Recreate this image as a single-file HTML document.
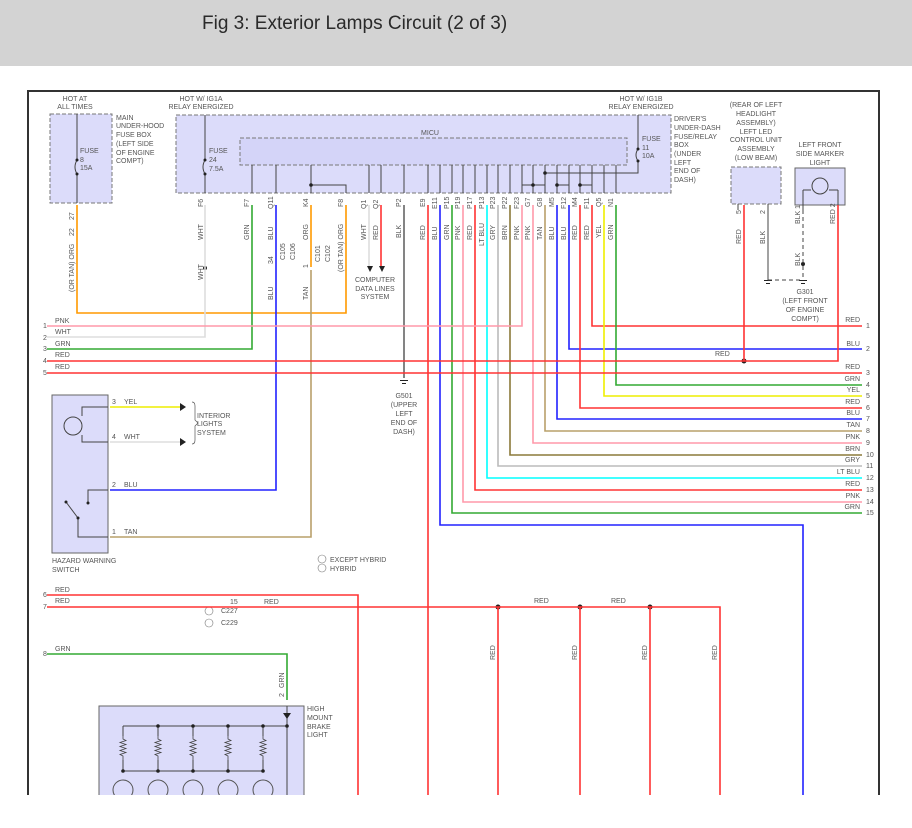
<!DOCTYPE html>
<html><head><meta charset="utf-8"><style>
html,body{margin:0;padding:0;background:#fff;width:912px;height:828px;overflow:hidden}
.bar{position:absolute;left:0;top:0;width:912px;height:66px;background:#d3d3d3}
.bar span{position:absolute;left:202px;top:13px;font:19px "Liberation Sans",sans-serif;color:#2a2a2a}
svg{position:absolute;left:0;top:0}
text{font-family:"Liberation Sans",sans-serif;font-size:7px;fill:#555}
</style></head><body>
<div class="bar"><span>Fig 3: Exterior Lamps Circuit (2 of 3)</span></div>
<svg width="912" height="828" viewBox="0 0 912 828">
<defs><clipPath id="c"><rect x="0" y="0" width="912" height="795"/></clipPath>
<path id="rz" d="M0 -12V-9l3 1.5l-6 2l6 2l-6 2l6 2l-6 2l6 2l-6 2l3 1.5V12" fill="none" stroke="#444" stroke-width=".8"/></defs>
<g clip-path="url(#c)">
<path d="M28 795 V91 H879 V795" fill="none" stroke="#333" stroke-width="2"/>
<rect x="50" y="114" width="62" height="89" fill="#dcdcfa" stroke="#777" stroke-dasharray="4,2"/>
<rect x="176" y="115" width="495" height="78" fill="#dcdcfa" stroke="#777" stroke-dasharray="4,2"/>
<rect x="240" y="138" width="387" height="27" fill="#d4d4f8" stroke="#777" stroke-dasharray="4,2"/>
<rect x="731" y="167" width="50" height="37" fill="#dcdcfa" stroke="#777" stroke-dasharray="4,2"/>
<rect x="795" y="168" width="50" height="37" fill="#dcdcfa" stroke="#666"/>
<rect x="52" y="395" width="56" height="158" fill="#dcdcfa" stroke="#666"/>
<rect x="99" y="706" width="205" height="100" fill="#dcdcfa" stroke="#666"/>
<g text-anchor="middle">
<text x="75" y="101">HOT AT</text><text x="75" y="109">ALL TIMES</text>
<text x="201" y="101">HOT W/ IG1A</text><text x="201" y="109">RELAY ENERGIZED</text>
<text x="641" y="101">HOT W/ IG1B</text><text x="641" y="109">RELAY ENERGIZED</text>
<text x="756" y="107">(REAR OF LEFT</text><text x="756" y="116">HEADLIGHT</text><text x="756" y="125">ASSEMBLY)</text><text x="756" y="134">LEFT LED</text><text x="756" y="142">CONTROL UNIT</text><text x="756" y="151">ASSEMBLY</text><text x="756" y="160">(LOW BEAM)</text>
<text x="820" y="147">LEFT FRONT</text><text x="820" y="156">SIDE MARKER</text><text x="820" y="165">LIGHT</text>
<text x="805" y="294">G301</text><text x="805" y="303">(LEFT FRONT</text><text x="805" y="312">OF ENGINE</text><text x="805" y="321">COMPT)</text>
<text x="404" y="398">G501</text><text x="404" y="407">(UPPER</text><text x="404" y="416">LEFT</text><text x="404" y="425">END OF</text><text x="404" y="434">DASH)</text>
<text x="375" y="282">COMPUTER</text><text x="375" y="291">DATA LINES</text><text x="375" y="299">SYSTEM</text>
<text x="430" y="135">MICU</text>
</g>
<text x="116" y="120">MAIN</text><text x="116" y="128">UNDER-HOOD</text><text x="116" y="137">FUSE BOX</text><text x="116" y="146">(LEFT SIDE</text><text x="116" y="155">OF ENGINE</text><text x="116" y="163">COMPT)</text>
<text x="674" y="121">DRIVER'S</text><text x="674" y="130">UNDER-DASH</text><text x="674" y="139">FUSE/RELAY</text><text x="674" y="147">BOX</text><text x="674" y="156">(UNDER</text><text x="674" y="165">LEFT</text><text x="674" y="173">END OF</text><text x="674" y="182">DASH)</text>
<text x="80" y="153">FUSE</text><text x="80" y="162">8</text><text x="80" y="170">15A</text>
<text x="209" y="153">FUSE</text><text x="209" y="162">24</text><text x="209" y="171">7.5A</text>
<text x="642" y="141">FUSE</text><text x="642" y="150">11</text><text x="642" y="158">10A</text>
<text x="197" y="418">INTERIOR</text><text x="197" y="426">LIGHTS</text><text x="197" y="435">SYSTEM</text>
<text x="52" y="563">HAZARD WARNING</text><text x="52" y="572">SWITCH</text>
<text x="307" y="711">HIGH</text><text x="307" y="720">MOUNT</text><text x="307" y="729">BRAKE</text><text x="307" y="737">LIGHT</text>
<text x="330" y="562">EXCEPT HYBRID</text><text x="330" y="571">HYBRID</text>
<circle cx="322" cy="559" r="4" fill="none" stroke="#777" stroke-width=".6"/><circle cx="322" cy="568" r="4" fill="none" stroke="#777" stroke-width=".6"/>
<text x="221" y="613">C227</text><text x="221" y="625">C229</text>
<circle cx="209" cy="611" r="4" fill="none" stroke="#777" stroke-width=".6"/><circle cx="209" cy="623" r="4" fill="none" stroke="#777" stroke-width=".6"/>
<text x="230" y="604">15</text><text x="264" y="604">RED</text>
<text x="534" y="603">RED</text><text x="611" y="603">RED</text><text x="715" y="356">RED</text>
<g stroke="#444" fill="none" stroke-width="1">
<path d="M77 114 V160 q-4 7 0 14 V203"/><path d="M205 115 V160 q-4 7 0 14 V193"/><path d="M638 115 V149 q-4 6 0 12 V173 H545"/>
<path d="M252 165V193M276 165V193M311 165V193M311 185H346V193M369 165V193M381 165V193M404 165V193M428 165V193M440 165V193M452 165V193M463 165V193M475 165V193M487 165V193M498 165V193M510 165V193M522 165V193M533 165V193M545 165V193M557 165V193M569 165V193M580 165V193M592 165V193M604 165V193M616 165V193M522 185H545M557 185H569M580 185H592"/>
<path d="M738 204V210M768 204V280M803 190H811M829 190H838M803 190V210M838 190V210"/>
<circle cx="820" cy="186" r="8"/>
<path d="M108 407H82V416M82 435V442H108M108 490H88V503M66 502L78 518M108 537H78V518"/>
<circle cx="73" cy="426" r="9"/>
<path d="M123 726H287M123 771H263M287 706V795"/>
<path d="M123 726V736M158 726V736M193 726V736M228 726V736M263 726V736M123 760V771M158 760V771M193 760V771M228 760V771M263 760V771"/>
</g>
<use href="#rz" x="123" y="748"/><use href="#rz" x="158" y="748"/><use href="#rz" x="193" y="748"/><use href="#rz" x="228" y="748"/><use href="#rz" x="263" y="748"/>
<g fill="#222"><circle cx="77" cy="160" r="1.5"/><circle cx="77" cy="174" r="1.5"/><circle cx="205" cy="160" r="1.5"/><circle cx="205" cy="174" r="1.5"/><circle cx="638" cy="149" r="1.5"/><circle cx="638" cy="161" r="1.5"/>
<circle cx="311" cy="185" r="1.8"/><circle cx="533" cy="185" r="1.8"/><circle cx="545" cy="173" r="1.8"/><circle cx="557" cy="185" r="1.8"/><circle cx="580" cy="185" r="1.8"/>
<circle cx="744" cy="361" r="2.5"/><circle cx="498" cy="607" r="2.5"/><circle cx="580" cy="607" r="2.5"/><circle cx="650" cy="607" r="2.5"/><circle cx="205" cy="268" r="2"/><circle cx="803" cy="264" r="2"/>
<circle cx="88" cy="503" r="1.5"/><circle cx="66" cy="502" r="1.5"/><circle cx="78" cy="518" r="1.5"/>
<circle cx="158" cy="726" r="1.8"/><circle cx="193" cy="726" r="1.8"/><circle cx="228" cy="726" r="1.8"/><circle cx="263" cy="726" r="1.8"/><circle cx="287" cy="726" r="1.8"/>
<circle cx="123" cy="771" r="1.8"/><circle cx="158" cy="771" r="1.8"/><circle cx="193" cy="771" r="1.8"/><circle cx="228" cy="771" r="1.8"/><circle cx="263" cy="771" r="1.8"/>
<path d="M367 266h6l-3 6zM379 266h6l-3 6zM180 403v8l6-4zM180 438v8l6-4zM283 713h8l-4 6z"/>
<path d="M764 280h8v1h-8zM766 283h4v1h-4zM799 280h8v1h-8zM801 283h4v1h-4zM400 380h8v1h-8zM402 383h4v1h-4z"/></g>
<circle cx="123" cy="790" r="10" fill="none" stroke="#555"/><circle cx="158" cy="790" r="10" fill="none" stroke="#555"/><circle cx="193" cy="790" r="10" fill="none" stroke="#555"/><circle cx="228" cy="790" r="10" fill="none" stroke="#555"/><circle cx="263" cy="790" r="10" fill="none" stroke="#555"/>
<path d="M768 280H803" stroke="#444" stroke-dasharray="4,3"/>
<path d="M803 210V280" stroke="#444" stroke-dasharray="4,3"/>
<path d="M192 402q3 0 3 4v14l3 3l-3 3v14q0 4-3 4" fill="none" stroke="#555" stroke-width=".7"/>
<g fill="none" stroke-width="1.6">
<path d="M77 205V313H346V205" stroke="#f90"/>
<path d="M311 205V267" stroke="#f90"/><path d="M311 270V537H110" stroke="#b9a06a"/>
<path d="M205 205V337H47" stroke="#ddd"/>
<path d="M252 205V349H47" stroke="#3a3"/>
<path d="M276 205V490H110" stroke="#22f"/>
<path d="M369 205V266" stroke="#ddd"/><path d="M381 205V266" stroke="#f33"/>
<path d="M404 205V378" stroke="#666"/>
<path d="M428 205V795" stroke="#f33"/>
<path d="M440 205V525H803V795" stroke="#22f"/>
<path d="M452 205V513H862" stroke="#3a3"/>
<path d="M463 205V502H862" stroke="#f9a"/>
<path d="M475 205V490H862" stroke="#f33"/>
<path d="M487 205V478H862" stroke="#0ff"/>
<path d="M498 205V466H862" stroke="#bbb"/>
<path d="M510 205V455H862" stroke="#8b7a3a"/>
<path d="M522 205V326H47" stroke="#f9a"/>
<path d="M533 205V443H862" stroke="#f9a"/>
<path d="M545 205V431H862" stroke="#b9a06a"/>
<path d="M557 205V419H862" stroke="#22f"/>
<path d="M569 205V349H862" stroke="#22f"/>
<path d="M580 205V408H862" stroke="#f33"/>
<path d="M592 205V326H862" stroke="#f33"/>
<path d="M604 205V396H862" stroke="#ee0"/>
<path d="M616 205V385H862" stroke="#3a3"/>
<path d="M47 361H838V205M744 361V205" stroke="#f33"/>
<path d="M47 373H862" stroke="#f33"/>
<path d="M110 407H180" stroke="#ee0"/><path d="M110 442H180" stroke="#ddd"/>
<path d="M47 595H358V795" stroke="#f33"/>
<path d="M47 607H720V795M498 607V795M580 607V795M650 607V795" stroke="#f33"/>
<path d="M47 654H287V700" stroke="#3a3"/>
</g>
<g>
<text x="43" y="328">1</text><text x="55" y="323">PNK</text>
<text x="43" y="340">2</text><text x="55" y="334">WHT</text>
<text x="43" y="351">3</text><text x="55" y="346">GRN</text>
<text x="43" y="363">4</text><text x="55" y="357">RED</text>
<text x="43" y="375">5</text><text x="55" y="369">RED</text>
<text x="43" y="597">6</text><text x="55" y="592">RED</text>
<text x="43" y="609">7</text><text x="55" y="603">RED</text>
<text x="43" y="656">8</text><text x="55" y="651">GRN</text>
<text x="112" y="404">3</text><text x="124" y="404">YEL</text>
<text x="112" y="439">4</text><text x="124" y="439">WHT</text>
<text x="112" y="487">2</text><text x="124" y="487">BLU</text>
<text x="112" y="534">1</text><text x="124" y="534">TAN</text>
</g>
<g text-anchor="end">
<text x="860" y="322">RED</text><text x="860" y="346">BLU</text><text x="860" y="369">RED</text><text x="860" y="381">GRN</text><text x="860" y="392">YEL</text><text x="860" y="404">RED</text><text x="860" y="415">BLU</text><text x="860" y="427">TAN</text><text x="860" y="439">PNK</text><text x="860" y="451">BRN</text><text x="860" y="462">GRY</text><text x="860" y="474">LT BLU</text><text x="860" y="486">RED</text><text x="860" y="498">PNK</text><text x="860" y="509">GRN</text>
</g>
<g>
<text x="866" y="328">1</text><text x="866" y="351">2</text><text x="866" y="375">3</text><text x="866" y="387">4</text><text x="866" y="398">5</text><text x="866" y="410">6</text><text x="866" y="421">7</text><text x="866" y="433">8</text><text x="866" y="445">9</text><text x="866" y="457">10</text><text x="866" y="468">11</text><text x="866" y="480">12</text><text x="866" y="492">13</text><text x="866" y="504">14</text><text x="866" y="515">15</text>
</g>
<g>
<text transform="translate(74,220) rotate(-90)">27</text><text transform="translate(74,236) rotate(-90)">22</text><text transform="translate(74,292) rotate(-90)">(OR TAN) ORG</text>
<text transform="translate(203,207) rotate(-90)">F6</text><text transform="translate(203,240) rotate(-90)">WHT</text><text transform="translate(203,280) rotate(-90)">WHT</text>
<text transform="translate(249,207) rotate(-90)">F7</text><text transform="translate(249,240) rotate(-90)">GRN</text>
<text transform="translate(273,209) rotate(-90)">Q11</text><text transform="translate(273,240) rotate(-90)">BLU</text><text transform="translate(273,264) rotate(-90)">34</text><text transform="translate(273,300) rotate(-90)">BLU</text>
<text transform="translate(285,260) rotate(-90)">C105</text><text transform="translate(295,260) rotate(-90)">C106</text>
<text transform="translate(308,207) rotate(-90)">K4</text><text transform="translate(308,240) rotate(-90)">ORG</text><text transform="translate(308,268) rotate(-90)">1</text><text transform="translate(308,300) rotate(-90)">TAN</text>
<text transform="translate(320,262) rotate(-90)">C101</text><text transform="translate(330,262) rotate(-90)">C102</text>
<text transform="translate(343,207) rotate(-90)">F8</text><text transform="translate(343,272) rotate(-90)">(OR TAN) ORG</text>
<text transform="translate(366,209) rotate(-90)">Q1</text><text transform="translate(366,240) rotate(-90)">WHT</text>
<text transform="translate(378,209) rotate(-90)">Q2</text><text transform="translate(378,240) rotate(-90)">RED</text>
<text transform="translate(401,207) rotate(-90)">P2</text><text transform="translate(401,238) rotate(-90)">BLK</text>
<text transform="translate(425,207) rotate(-90)">E9</text><text transform="translate(425,240) rotate(-90)">RED</text>
<text transform="translate(437,209) rotate(-90)">E11</text><text transform="translate(437,240) rotate(-90)">BLU</text>
<text transform="translate(449,209) rotate(-90)">P15</text><text transform="translate(449,240) rotate(-90)">GRN</text>
<text transform="translate(460,209) rotate(-90)">P19</text><text transform="translate(460,240) rotate(-90)">PNK</text>
<text transform="translate(472,209) rotate(-90)">P17</text><text transform="translate(472,240) rotate(-90)">RED</text>
<text transform="translate(484,209) rotate(-90)">P13</text><text transform="translate(484,246) rotate(-90)">LT BLU</text>
<text transform="translate(495,209) rotate(-90)">P23</text><text transform="translate(495,240) rotate(-90)">GRY</text>
<text transform="translate(507,209) rotate(-90)">P22</text><text transform="translate(507,240) rotate(-90)">BRN</text>
<text transform="translate(519,209) rotate(-90)">F23</text><text transform="translate(519,240) rotate(-90)">PNK</text>
<text transform="translate(530,207) rotate(-90)">G7</text><text transform="translate(530,240) rotate(-90)">PNK</text>
<text transform="translate(542,207) rotate(-90)">G8</text><text transform="translate(542,240) rotate(-90)">TAN</text>
<text transform="translate(554,207) rotate(-90)">M5</text><text transform="translate(554,240) rotate(-90)">BLU</text>
<text transform="translate(566,209) rotate(-90)">F12</text><text transform="translate(566,240) rotate(-90)">BLU</text>
<text transform="translate(577,207) rotate(-90)">M4</text><text transform="translate(577,240) rotate(-90)">RED</text>
<text transform="translate(589,209) rotate(-90)">F11</text><text transform="translate(589,240) rotate(-90)">RED</text>
<text transform="translate(601,207) rotate(-90)">Q5</text><text transform="translate(601,238) rotate(-90)">YEL</text>
<text transform="translate(613,207) rotate(-90)">N1</text><text transform="translate(613,240) rotate(-90)">GRN</text>
<text transform="translate(741,214) rotate(-90)">5</text><text transform="translate(741,244) rotate(-90)">RED</text>
<text transform="translate(765,214) rotate(-90)">2</text><text transform="translate(765,244) rotate(-90)">BLK</text>
<text transform="translate(800,224) rotate(-90)">BLK 1</text><text transform="translate(800,266) rotate(-90)">BLK</text>
<text transform="translate(835,224) rotate(-90)">RED 2</text>
<text transform="translate(495,660) rotate(-90)">RED</text><text transform="translate(577,660) rotate(-90)">RED</text><text transform="translate(647,660) rotate(-90)">RED</text><text transform="translate(717,660) rotate(-90)">RED</text>
<text transform="translate(284,697) rotate(-90)">2</text><text transform="translate(284,688) rotate(-90)">GRN</text>
</g>
</g>
</svg>
</body></html>
